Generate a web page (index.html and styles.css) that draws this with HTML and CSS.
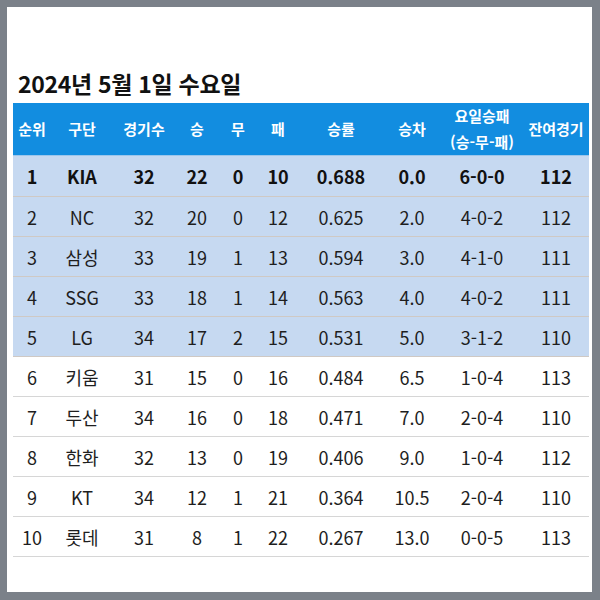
FILE: index.html
```html
<!DOCTYPE html>
<html lang="ko">
<head>
<meta charset="utf-8">
<link rel="stylesheet" href="styles.css">
</head>
<body>
<div class="card">
  <h1 class="title">2024년 5월 1일 수요일</h1>
  <table class="standings">
    <colgroup>
      <col class="c1"><col class="c2"><col class="c3"><col class="c4"><col class="c5">
      <col class="c6"><col class="c7"><col class="c8"><col class="c9"><col class="c10">
    </colgroup>
    <thead>
      <tr>
        <th>순위</th><th>구단</th><th>경기수</th><th>승</th><th>무</th><th>패</th><th>승률</th><th>승차</th><th>요일승패<br>(승-무-패)</th><th>잔여경기</th>
      </tr>
    </thead>
    <tbody>
      <tr class="hl top"><td>1</td><td>KIA</td><td>32</td><td>22</td><td>0</td><td>10</td><td>0.688</td><td>0.0</td><td>6-0-0</td><td>112</td></tr>
      <tr class="hl"><td>2</td><td>NC</td><td>32</td><td>20</td><td>0</td><td>12</td><td>0.625</td><td>2.0</td><td>4-0-2</td><td>112</td></tr>
      <tr class="hl"><td>3</td><td>삼성</td><td>33</td><td>19</td><td>1</td><td>13</td><td>0.594</td><td>3.0</td><td>4-1-0</td><td>111</td></tr>
      <tr class="hl"><td>4</td><td>SSG</td><td>33</td><td>18</td><td>1</td><td>14</td><td>0.563</td><td>4.0</td><td>4-0-2</td><td>111</td></tr>
      <tr class="hl"><td>5</td><td>LG</td><td>34</td><td>17</td><td>2</td><td>15</td><td>0.531</td><td>5.0</td><td>3-1-2</td><td>110</td></tr>
      <tr><td>6</td><td>키움</td><td>31</td><td>15</td><td>0</td><td>16</td><td>0.484</td><td>6.5</td><td>1-0-4</td><td>113</td></tr>
      <tr><td>7</td><td>두산</td><td>34</td><td>16</td><td>0</td><td>18</td><td>0.471</td><td>7.0</td><td>2-0-4</td><td>110</td></tr>
      <tr><td>8</td><td>한화</td><td>32</td><td>13</td><td>0</td><td>19</td><td>0.406</td><td>9.0</td><td>1-0-4</td><td>112</td></tr>
      <tr><td>9</td><td>KT</td><td>34</td><td>12</td><td>1</td><td>21</td><td>0.364</td><td>10.5</td><td>2-0-4</td><td>110</td></tr>
      <tr><td>10</td><td>롯데</td><td>31</td><td>8</td><td>1</td><td>22</td><td>0.267</td><td>13.0</td><td>0-0-5</td><td>113</td></tr>
    </tbody>
  </table>
</div>
</body>
</html>
```

FILE: styles.css
```css
html, body {
  margin: 0;
  padding: 0;
}
body {
  background: #7b8189;
  width: 600px;
  height: 600px;
  overflow: hidden;
  font-family: "Noto Sans CJK KR", "Noto Sans", sans-serif;
}
.card {
  box-sizing: border-box;
  margin: 7px 0 0 7px;
  width: 585px;
  height: 585px;
  background: #ffffff;
  padding: 60px 0 0 6px;
}
.title {
  margin: 0 0 4px 5px;
  height: 32px;
  line-height: 32px;
  font-size: 23px;
  font-weight: 700;
  color: #111;
  letter-spacing: -0.3px;
}
.standings {
  border-collapse: collapse;
  table-layout: fixed;
  width: 576px;
}
.c1 { width: 38px; }
.c2 { width: 62px; }
.c3 { width: 62px; }
.c4 { width: 44px; }
.c5 { width: 38px; }
.c6 { width: 42px; }
.c7 { width: 84px; }
.c8 { width: 58px; }
.c9 { width: 82px; }
.c10 { width: 66px; }
.standings th {
  background: #128de0;
  color: #ffffff;
  font-size: 15px;
  font-weight: 700;
  height: 51px;
  padding: 0;
  line-height: 26px;
  text-align: center;
  white-space: nowrap;
  border-bottom: 1px solid #9cc6ec;
}
.standings td {
  height: 39px;
  padding: 0;
  text-align: center;
  font-size: 18px;
  color: #1e1e1e;
  border-bottom: 1px solid #d6d6d6;
  white-space: nowrap;
}
.standings tr.hl td {
  background: #c6d9f1;
  border-bottom-color: #cfc9c4;
}
.standings tr.top td {
  height: 40px;
  font-weight: 700;
  color: #111;
}
```
